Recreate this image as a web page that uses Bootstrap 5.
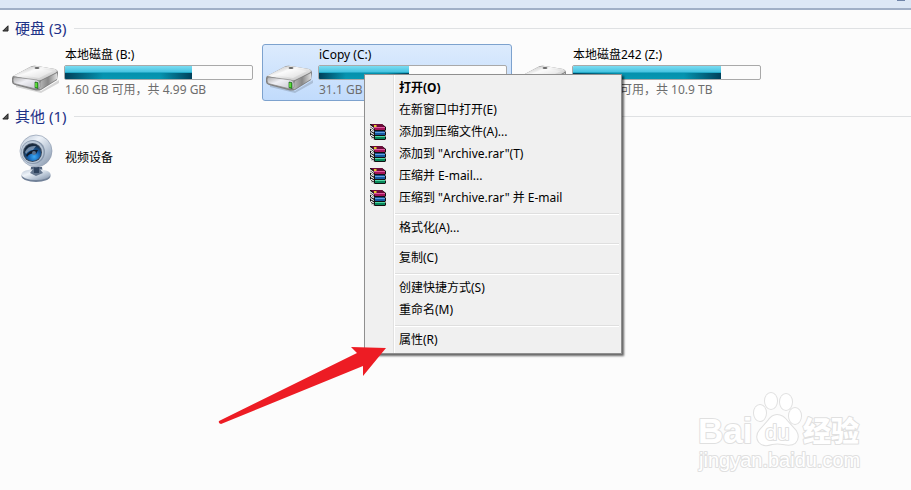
<!DOCTYPE html>
<html lang="zh-CN">
<head>
<meta charset="utf-8">
<meta name="viewport" content="width=device-width, initial-scale=1">
<title>计算机</title>
<link href="https://cdn.jsdelivr.net/npm/bootstrap@5.3.0/dist/css/bootstrap.min.css" rel="stylesheet">
<style>
body{font-family:"Noto Sans","Noto Sans CJK SC",sans-serif;font-size:12px;line-height:16px;color:#000;background:#fcfcfc;min-height:100vh;overflow:hidden}
.toolbar{height:10px;background:#dce7f5;border-bottom:2px solid #a0afc6;justify-content:flex-end}
.toolbar-icon{width:8px;height:1px;margin-right:6px;background:#6f84a8}
.group-head{height:20px;padding-left:2px;font-size:15px;line-height:20px;color:#1e3287;gap:6px}
.group-head::after{content:"";flex:1;height:1px;background:#dfe1e3;margin-left:2px}
.tiles{gap:4px;padding:6px 8px 5px}
.tile{width:250px;height:57px;border:1px solid transparent;border-radius:3px;padding:0 3px;color:#000;gap:4px}
.tile.selected{border-color:#7da2ce;background:linear-gradient(#dcebfd,#c1dbfc)}
.tile .pic{width:48px;height:48px;flex:none}
.tile-body{width:189px}
.tile-text{padding-left:1px}
.devices{padding-top:3px}
.meter{height:15px;border:1px solid #a9a9a9;border-radius:2px;background:#fcfcfc;margin:2px 0}
.meter .progress-bar{background:linear-gradient(90deg,#00405a,#00405a00 30%,#00405a00 75%,#00405a) 0 100%/100% 50% no-repeat,linear-gradient(#7bdcf2,#43c2e0 48%,#0490ad 52%,#0797b2)}
.sub{color:#6d6d6d}
.menu{left:364px;top:74px;width:258px;padding:2px;border:1px solid #8f8f8f;background:linear-gradient(90deg,#f0f0f0 28px,#e1e1e1 28px,#e1e1e1 29px,#fff 29px,#fff 30px,#f0f0f0 30px);box-shadow:2px 2px 2px #0009;z-index:2}
.menu button{height:22px;border:0;background:none;padding:0 3px;text-align:left;color:#000;gap:13px}
.menu .ico{width:16px;height:16px;flex:none}
.menu hr{height:2px;margin:4px 0 2px 28px;border:0;border-top:1px solid #dfdfdf;background:#fff;opacity:1}
.pointer{left:218px;top:345px;width:170px;height:80px;z-index:3}
.brand{right:48px;bottom:14px;width:166px;height:86px}
</style>
<script src="https://cdn.jsdelivr.net/npm/bootstrap@5.3.0/dist/js/bootstrap.bundle.min.js"></script>
</head>
<body class="position-relative">
<svg width="0" height="0" class="position-absolute" aria-hidden="true">
<defs>
<linearGradient id="top" x1="0" y1="0" x2="1" y2="1"><stop stop-color="#aaa"/><stop offset=".4" stop-color="#f8f8f8"/><stop offset="1" stop-color="#b5b5b5"/></linearGradient>
<linearGradient id="side" x1="0" y1="0" x2="1" y2="0"><stop stop-color="#bbb"/><stop offset=".5" stop-color="#888"/><stop offset="1" stop-color="#ddd"/></linearGradient>
<linearGradient id="front" x1="0" y1="0" x2="1" y2="1"><stop stop-color="#aaa"/><stop offset=".4" stop-color="#f0f0f5"/><stop offset="1" stop-color="#c3c3cb"/></linearGradient>
<linearGradient id="ball" x1="0" y1="0" x2="1" y2="1"><stop stop-color="#b4c1d2"/><stop offset=".35" stop-color="#eef3f9"/><stop offset=".7" stop-color="#b1bfd0"/><stop offset="1" stop-color="#7e8ca2"/></linearGradient>
<radialGradient id="lens" cx=".6" cy=".75" r=".7"><stop stop-color="#3caaf5"/><stop offset=".45" stop-color="#1767b7"/><stop offset="1" stop-color="#172638"/></radialGradient>
<symbol id="drive" viewBox="0 0 48 48">
<g transform="translate(0 2)">
<path d="M4 34l25 6 18-11v3L29 42 4 36z" fill="#000" opacity=".15"/>
<path d="M0 27Q0 25 3 24L18 16Q21 14 25 15L43 18Q46 19 46 22L45 29 29 39Q26 40 22 39L3 34Q0 33 0 31z" fill="#808080"/>
<path d="M1 25L18 16Q21 15 25 15L43 18Q47 20 43 22L29 29Q25 30 20 29z" fill="url(#top)"/>
<path d="M10 24l13-7 18 3-14 7z" fill="#fff" opacity=".4"/>
<path d="M29 30L45 22V28L29 38Q27 39 27 36z" fill="url(#side)"/>
<path d="M3 26L25 29Q28 30 28 33V36Q28 38 24 38L4 33Q1 33 1 29 1 26 3 26z" fill="url(#front)" stroke="#858585" stroke-width=".7"/>
<path d="M23 31l3 .5v6l-3-.7z" fill="#2fbd17" stroke="#24582a" stroke-width=".7"/><path d="M24 32v4" stroke="#8bfa5d"/>
<ellipse cx="25" cy="17" rx="2.5" ry="1" fill="#666"/>
</g>
</symbol>
<symbol id="rar" viewBox="0 0 16 16">
<path d="M0 0h12l4 3v3l-1 1 1 1v3l-1 1 1 1v2l-1 1H5l-4-2v-2l-1-1V9l1-1-1-1V4z" fill="#111"/>
<path d="M1 0h11l3 3H4z" fill="#6d0b39"/><path d="M4 3h11v1H4z" fill="#e05ba1"/><path d="M4 4h11v2H5z" fill="#a41459"/>
<path d="M0 1l4 3v1L0 2.500zM0 3l4 3v1L0 4.500z" fill="#fff"/>
<path d="M5 7h9l1 1H4z" fill="#1b4b8d"/><path d="M5 8h10v1H5z" fill="#5fa4e0"/><path d="M5 9h10v2H5z" fill="#1559a3"/>
<path d="M1 5.500l3 2v1l-3-1.500zM1 8l3 2v1L1 9.500z" fill="#fff"/>
<path d="M5 12h10v1H5z" fill="#57d9a5"/><path d="M5 13h10v2H5z" fill="#08885b"/>
<path d="M1 10.500l3 2v1L1 12zM1 13l3 1.500v1L1 14z" fill="#fff"/>
<path d="M4 1h2l1 1-1 1H4z" fill="#e5c92c"/>
</symbol>
</defs></svg>

<header class="toolbar d-flex"><span class="toolbar-icon"></span></header>
<main>
<section class="pt-2">
<h2 class="group-head d-flex align-items-center m-0 fw-normal"><svg width="7" height="7" viewBox="0 0 7 7"><path d="M6 .8V6H.8z" fill="#555" stroke="#222"/></svg>硬盘 (3)</h2>
<div class="tiles d-flex">
<a href="#" class="tile d-flex align-items-center text-decoration-none"><svg class="pic"><use href="#drive"/></svg>
<div class="tile-body"><div class="tile-text">本地磁盘 (B:)</div><div class="progress meter"><div class="progress-bar" style="width:68%"></div></div><div class="tile-text sub">1.60 GB 可用，共 4.99 GB</div></div></a>
<a href="#" class="tile selected d-flex align-items-center text-decoration-none"><svg class="pic"><use href="#drive"/></svg>
<div class="tile-body"><div class="tile-text">iCopy (C:)</div><div class="progress meter"><div class="progress-bar" style="width:48%"></div></div><div class="tile-text sub">31.1 GB</div></div></a>
<a href="#" class="tile d-flex align-items-center text-decoration-none"><svg class="pic"><use href="#drive"/></svg>
<div class="tile-body"><div class="tile-text">本地磁盘242 (Z:)</div><div class="progress meter"><div class="progress-bar" style="width:79%"></div></div><div class="sub ps-5">可用，共 10.9 TB</div></div></a>
</div>
</section>
<section>
<h2 class="group-head d-flex align-items-center m-0 fw-normal"><svg width="7" height="7" viewBox="0 0 7 7"><path d="M6 .8V6H.8z" fill="#555" stroke="#222"/></svg>其他 (1)</h2>
<div class="tiles devices d-flex">
<a href="#" class="tile d-flex align-items-center text-decoration-none"><svg class="pic" viewBox="0 0 48 48">
<path d="M19 33h11l1 8H18z" fill="#53657e"/>
<ellipse cx="24" cy="42" rx="14.500" ry="6" fill="#718198"/><ellipse cx="24" cy="40.500" rx="14.500" ry="5.500" fill="url(#ball)"/>
<path d="M18 39l4-5h5l4 5-7 3z" fill="#63758d"/><path d="M22 33h5v6h-5z" fill="#2f435e"/>
<circle cx="24" cy="17" r="16" fill="url(#ball)" stroke="#8f9cb0" stroke-width=".7"/>
<circle cx="21" cy="18" r="12" fill="#8797ac"/><circle cx="20.500" cy="18" r="11" fill="#bac7d6"/><circle cx="20.500" cy="18.500" r="9.500" fill="#3b4a5e"/><circle cx="20.500" cy="18.500" r="8.500" fill="url(#lens)"/>
<path d="M13 18q3-7 11-6l-3 4q-4 0-7 4z" fill="#a4b4c7" opacity=".65"/><path d="M14 21q5-6 12-5l-2 4q-6-2-9 3z" fill="#101a29"/><circle cx="22" cy="19" r="2" fill="#5a7392"/></svg>
<div class="tile-body tile-text">视频设备</div></a>
</div>
</section>
</main>

<div class="menu position-absolute d-flex flex-column" role="menu">
<button class="d-flex align-items-center fw-bold" role="menuitem"><span class="ico"></span>打开(O)</button>
<button class="d-flex align-items-center" role="menuitem"><span class="ico"></span>在新窗口中打开(E)</button>
<button class="d-flex align-items-center" role="menuitem"><svg class="ico"><use href="#rar"/></svg>添加到压缩文件(A)...</button>
<button class="d-flex align-items-center" role="menuitem"><svg class="ico"><use href="#rar"/></svg>添加到 "Archive.rar"(T)</button>
<button class="d-flex align-items-center" role="menuitem"><svg class="ico"><use href="#rar"/></svg>压缩并 E-mail...</button>
<button class="d-flex align-items-center" role="menuitem"><svg class="ico"><use href="#rar"/></svg>压缩到 "Archive.rar" 并 E-mail</button>
<hr>
<button class="d-flex align-items-center" role="menuitem"><span class="ico"></span>格式化(A)...</button>
<hr>
<button class="d-flex align-items-center" role="menuitem"><span class="ico"></span>复制(C)</button>
<hr>
<button class="d-flex align-items-center" role="menuitem"><span class="ico"></span>创建快捷方式(S)</button>
<button class="d-flex align-items-center" role="menuitem"><span class="ico"></span>重命名(M)</button>
<hr>
<button class="d-flex align-items-center" role="menuitem"><span class="ico"></span>属性(R)</button>
</div>

<svg class="pointer position-absolute" viewBox="0 0 170 80" aria-hidden="true"><path d="M1 76L139 8 133 2 168 3 145 31V21L3 79Q0 78 1 76z" fill="#ed1c24"/></svg>

<svg class="brand position-absolute" viewBox="0 0 166 86" role="img" aria-label="Baidu 经验">
<g fill="#fff" stroke="#e0e0e0" stroke-width="2" paint-order="stroke" stroke-linejoin="round">
<text x="1" y="53" font-family="Liberation Sans, sans-serif" font-weight="700" font-size="35">Bai</text>
<ellipse cx="63" cy="23" rx="6" ry="8"/><ellipse cx="74" cy="11" rx="6" ry="8"/><ellipse cx="89" cy="12" rx="6" ry="8"/><ellipse cx="98" cy="26" rx="6" ry="8"/>
<path d="M80 25Q86 25 91 32L99 41Q103 48 98 53 94 56 86 54 80 53 75 54 66 57 62 52 58 46 63 40L71 31Q75 25 80 25z"/>
<text x="68" y="50" font-family="Liberation Sans, sans-serif" font-size="22">du</text>
<text x="106" y="52" font-family="Noto Sans CJK SC, sans-serif" font-weight="900" font-size="28">经验</text>
<text x="2" y="77" font-family="Liberation Sans, sans-serif" font-size="20">jingyan.baidu.com</text>
</g></svg>
</body>
</html>
